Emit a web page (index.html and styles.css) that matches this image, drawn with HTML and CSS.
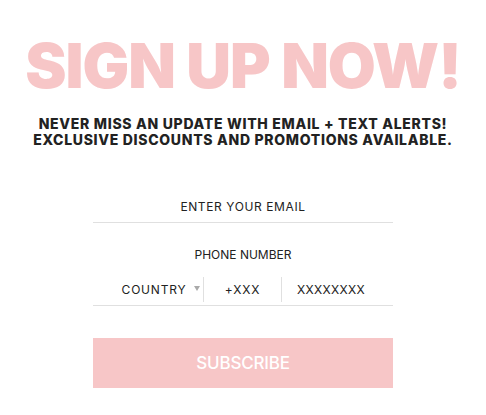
FILE: index.html
```html
<!DOCTYPE html>
<html>
<head>
<meta charset="utf-8">
<link rel="stylesheet" href="styles.css">
</head>
<body>
<div class="wrap">
  <h1 class="title">SIGN UP NOW!</h1>
  <p class="sub">NEVER MISS AN UPDATE WITH EMAIL + TEXT ALERTS!<br>EXCLUSIVE DISCOUNTS AND PROMOTIONS AVAILABLE.</p>
  <form class="form">
    <div class="field email">ENTER YOUR EMAIL</div>
    <div class="label">PHONE NUMBER</div>
    <div class="phone">
      <div class="cell country">COUNTRY<span class="caret"></span></div>
      <div class="cell code">+XXX</div>
      <div class="cell num">XXXXXXXX</div>
    </div>
    <button type="button" class="btn">SUBSCRIBE</button>
  </form>
</div>
</body>
</html>
```
FILE: styles.css
```css
html, body { margin: 0; padding: 0; background: #fff; }
body { font-family: Inter, "DejaVu Sans", sans-serif; color: #222; }
.wrap { display: flex; flex-direction: column; align-items: center; padding-top: 31px; }
.title {
  margin: 0;
  font-size: 62px;
  line-height: 70px;
  font-weight: 900;
  color: #f7c6c7;
  letter-spacing: -1px;
}
.sub {
  margin: 15px 0 0;
  text-align: center;
  font-size: 14px;
  line-height: 16px;
  font-weight: 800;
  color: #222;
  letter-spacing: 0.7px;
}
.form { width: 300px; display: flex; flex-direction: column; margin-top: 47px; }
.field {
  text-align: center;
  font-size: 12px;
  line-height: 15px;
  letter-spacing: 0.6px;
  padding: 4px 0 8px;
  border-bottom: 1px solid #e0e0e0;
  color: #222;
}
.label {
  text-align: center;
  font-size: 12px;
  line-height: 15px;
  margin-top: 24px;
  color: #222;
}
.phone {
  display: flex;
  margin-top: 15px;
  border-bottom: 1px solid #e0e0e0;
  padding-bottom: 3px;
  font-size: 12px;
  letter-spacing: 0.8px;
}
.cell { display: flex; align-items: center; justify-content: center; height: 25px; }
.country { width: 111px; position: relative; border-right: 1px solid #e0e0e0; padding-left: 12px; box-sizing: border-box; }
.code { width: 77px; border-right: 1px solid #e0e0e0; }
.num { flex: 1; padding-right: 13px; letter-spacing: 0.3px; }
.caret {
  position: absolute;
  right: 3px;
  top: 9px;
  width: 0; height: 0;
  border-left: 3px solid transparent;
  border-right: 3px solid transparent;
  border-top: 5px solid #aaa;
}
.btn {
  margin-top: 32px;
  height: 50px;
  border: 0;
  background: #f7c6c7;
  color: #fff;
  font-family: inherit;
  font-size: 17px;
  font-weight: 500;
  letter-spacing: -0.2px;
}
```
